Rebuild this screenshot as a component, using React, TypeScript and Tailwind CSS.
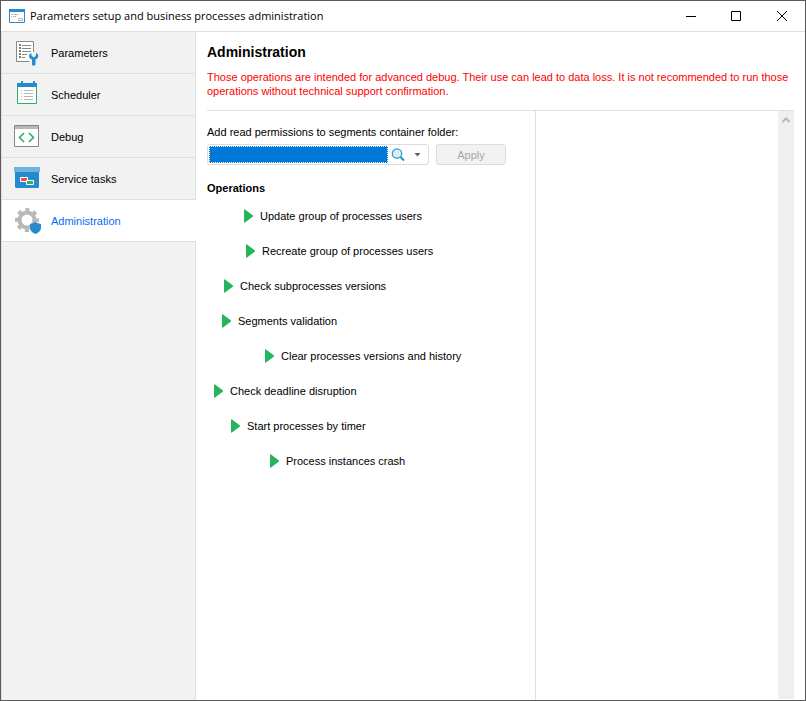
import type { ReactNode } from 'react';

interface Section {
  label: string;
  icon: ReactNode;
}

interface Operation {
  label: string;
  indent: string;
}

function ParametersIcon() {
  return (
    <svg width="28" height="29" viewBox="0 0 28 29" aria-hidden="true">
      <path d="M20.5 14V3.5H3.5v20h13" fill="#fff" stroke="#868686" />
      <path d="M6 7h2M6 10h2M6 13h2M6 16h2M6 19h2" stroke="#7a7a7a" strokeWidth="2" />
      <path d="M9 7.5h9M9 10.5h9M9 13.5h9M9 16.5h5M9 19.5h3" stroke="#868686" />
      <path
        d="M18.5 15v2.5L20 19h1.5l1.5-1.500V15c1.500.5 2.500 1.800 2.300 3.300-.2 1.700-1.300 2.700-2.800 3.200v5L21 27.700h-1L19 26.500v-5c-1.600-.5-2.800-1.500-3-3.200-.1-1.500 1-2.800 2.500-3.300z"
        fill="#268bcc"
      />
    </svg>
  );
}

function SchedulerIcon() {
  return (
    <svg width="28" height="29" viewBox="0 0 28 29" aria-hidden="true">
      <path d="M4.5 6v17.5h19V6" fill="#fff" stroke="#27b45f" />
      <path d="M4 3h4V1h2v2h10V1h2v2h2v4H4z" fill="#268bcc" />
      <path d="M8 10.5h1M11 10.5h9M8 13.5h1M11 13.5h9M8 16.5h1M11 16.5h9M8 19.5h1M11 19.5h9" stroke="#b8b8b8" />
    </svg>
  );
}

function DebugIcon() {
  return (
    <svg width="28" height="29" viewBox="0 0 28 29" aria-hidden="true">
      <path d="M1.5 3.5h24v21h-24z" fill="#fff" stroke="#868686" />
      <path d="M2 4h23v3H2z" fill="#b8b8b8" />
      <path d="M11 11l-4.5 4.5L11 20M16 11l4.5 4.5L16 20" fill="none" stroke="#27b45f" strokeWidth="1.6" />
    </svg>
  );
}

function ServiceTasksIcon() {
  return (
    <svg width="28" height="29" viewBox="0 0 28 29" aria-hidden="true">
      <path d="M1 3h26v5H1z" fill="#6fb4de" />
      <path d="M2 8h24v15l-1 1H3l-1-1z" fill="#268bcc" />
      <path d="M7.5 13.5h7v4h-7z" fill="#ee4653" stroke="#fff" />
      <path d="M13.5 16.5h7v4h-7z" fill="#27b45f" stroke="#fff" />
    </svg>
  );
}

function AdministrationIcon() {
  return (
    <svg width="28" height="29" viewBox="0 0 28 29" aria-hidden="true">
      <circle cx="14" cy="14" r="7.5" fill="none" stroke="#b8b8b8" strokeWidth="4" />
      <circle cx="14" cy="14" r="10.5" fill="none" stroke="#b8b8b8" strokeWidth="3" strokeDasharray="4.2 4.047" strokeDashoffset="2.1" />
      <path d="M17 18q3-.3 5.500-2 2.500 1.700 5.500 2v4.500q-.8 3.500-5.500 5.500-4.700-2-5.500-5.500z" fill="#268bcc" />
    </svg>
  );
}

const SECTIONS: Section[] = [
  { label: 'Parameters', icon: <ParametersIcon /> },
  { label: 'Scheduler', icon: <SchedulerIcon /> },
  { label: 'Debug', icon: <DebugIcon /> },
  { label: 'Service tasks', icon: <ServiceTasksIcon /> },
  { label: 'Administration', icon: <AdministrationIcon /> },
];

const OPERATIONS: Operation[] = [
  { label: 'Update group of processes users', indent: 'pl-[37px]' },
  { label: 'Recreate group of processes users', indent: 'pl-[39px]' },
  { label: 'Check subprocesses versions', indent: 'pl-[17px]' },
  { label: 'Segments validation', indent: 'pl-[15px]' },
  { label: 'Clear processes versions and history', indent: 'pl-[58px]' },
  { label: 'Check deadline disruption', indent: 'pl-[7px]' },
  { label: 'Start processes by timer', indent: 'pl-[24px]' },
  { label: 'Process instances crash', indent: 'pl-[63px]' },
];

function TitleBar() {
  return (
    <header className="flex h-[31px] shrink-0 items-center border-b border-[#dfdfdf] pl-2">
      <svg width="16" height="14" viewBox="0 0 16 14" aria-hidden="true">
        <path d="M.5.5h15v13H.5z" fill="#fff" stroke="#268bcc" />
        <path d="M0 0h16v3H0z" fill="#268bcc" />
        <path d="M2 5.5h2M5 5.5h4M2 7.5h1M4 7.5h3" stroke="#b8b8b8" />
        <path d="M9.5 9.5h4v2h-4z" fill="none" stroke="#b8b8b8" />
      </svg>
      <h1 className="ml-[5px] flex-1 truncate font-['Open_Sans',sans-serif] text-[11px] leading-4">
        Parameters setup and business processes administration
      </h1>
      <button type="button" aria-label="Minimize" className="flex h-full w-[45px] items-center justify-center">
        <svg width="10" height="10" viewBox="0 0 10 10">
          <path d="M0 5.5h10" stroke="#000" />
        </svg>
      </button>
      <button type="button" aria-label="Maximize" className="flex h-full w-[46px] items-center justify-center">
        <svg width="10" height="10" viewBox="0 0 10 10">
          <path d="M.5.5h9v9h-9z" fill="none" stroke="#000" />
        </svg>
      </button>
      <button type="button" aria-label="Close" className="flex h-full w-[46px] items-center justify-center">
        <svg width="10" height="10" viewBox="0 0 10 10">
          <path d="M0 0l10 10M10 0L0 10" stroke="#000" />
        </svg>
      </button>
    </header>
  );
}

function Sidebar({ active }: { active: string }) {
  return (
    <nav className="flex w-[195px] shrink-0 flex-col border-l border-[#dfdfdf] bg-[#f2f2f2]">
      {SECTIONS.map(({ label, icon }) => (
        <button
          key={label}
          type="button"
          aria-current={label === active ? 'page' : undefined}
          className={`flex h-[42px] shrink-0 items-center gap-2.5 border-b border-[#dfdfdf] pl-[11px] text-left ${
            label === active ? 'bg-white text-[#0a6cf0]' : 'border-r'
          }`}
        >
          {icon}
          {label}
        </button>
      ))}
      <div className="flex-1 border-r border-[#dfdfdf]" />
    </nav>
  );
}

function FolderPicker() {
  return (
    <div className="mt-[5px] flex gap-[7px]">
      <div className="flex h-[21px] w-[222px] items-center rounded-[3px] border border-[#dcdcdc] bg-white pl-px">
        <input
          id="folder"
          type="text"
          className="h-[17px] min-w-0 flex-1 border border-dotted border-white bg-[#0078d7] px-1 text-white outline-none"
        />
        <button type="button" aria-label="Choose folder" className="flex w-5 items-center justify-center">
          <svg width="14" height="14" viewBox="0 0 14 14">
            <circle cx="6" cy="5.5" r="4.7" fill="#d9edf7" stroke="#3a9ad4" strokeWidth="1.3" />
            <path d="M9.5 9l3.5 3.5" stroke="#268bcc" strokeWidth="1.8" />
          </svg>
        </button>
        <button type="button" aria-label="Show list" className="flex w-5 items-center justify-start pl-1.5">
          <svg width="7" height="4" viewBox="0 0 7 4">
            <path d="M.5 0h6L3.5 3.5z" fill="#606060" />
          </svg>
        </button>
      </div>
      <button
        type="button"
        disabled
        className="h-[21px] w-[70px] rounded-[3px] border border-[#dcdcdc] bg-[#f2f2f2] text-[#a6a6a6]"
      >
        Apply
      </button>
    </div>
  );
}

function OperationList() {
  return (
    <ul className="mt-[3px]">
      {OPERATIONS.map(({ label, indent }) => (
        <li key={label} className={`flex h-[35px] items-center ${indent}`}>
          <button type="button" className="flex items-center gap-[7px]">
            <svg width="9" height="14" viewBox="0 0 9 14" aria-hidden="true">
              <path d="M0 1Q0 0 1 .5l8 6v1l-8 6Q0 14 0 13z" fill="#27b45f" />
            </svg>
            {label}
          </button>
        </li>
      ))}
    </ul>
  );
}

export default function App() {
  return (
    <div className="flex h-screen flex-col border border-[#5a5a5a] bg-white font-['Liberation_Sans',Arial,sans-serif] text-[11px] leading-[14px] text-black">
      <TitleBar />
      <div className="flex min-h-0 flex-1">
        <Sidebar active="Administration" />
        <main className="flex min-w-0 flex-1 flex-col pt-2.5 pr-[11px] pl-[11px]">
          <h2 className="text-[14px] leading-5 font-bold">Administration</h2>
          <p className="mt-2 text-[#ff0000]">
            Those operations are intended for advanced debug. Their use can lead to data loss. It is not recommended to
            run those operations without technical support confirmation.
          </p>
          <div className="mt-3 flex min-h-0 flex-1 border-t border-[#dfdfdf]">
            <section className="w-[329px] shrink-0 border-r border-[#dfdfdf] pt-3.5">
              <label htmlFor="folder" className="block">
                Add read permissions to segments container folder:
              </label>
              <FolderPicker />
              <h3 className="mt-4 font-bold">Operations</h3>
              <OperationList />
            </section>
            <div className="flex flex-1 justify-end pb-px">
              <div className="w-4 bg-[#efefef] pt-1.5">
                <button type="button" aria-label="Scroll up" className="flex w-full justify-center">
                  <svg width="8" height="6" viewBox="0 0 8 6">
                    <path d="M.5 5L4 1.5 7.5 5" fill="none" stroke="#b8b8b8" strokeWidth="2" />
                  </svg>
                </button>
              </div>
            </div>
          </div>
        </main>
      </div>
    </div>
  );
}
